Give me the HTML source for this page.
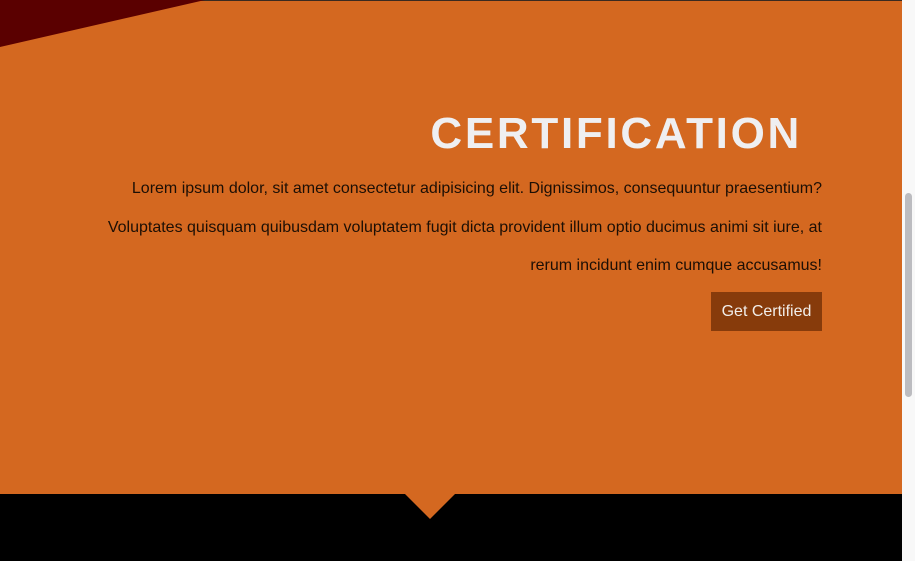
<!DOCTYPE html>
<html><head><style>
html,body{margin:0;padding:0;width:915px;height:561px;overflow:hidden;background:#fff;font-family:"Liberation Sans",Arial,sans-serif}
.sec{position:absolute;left:0;top:0;width:902px;height:494px;background:#d46820;border-top:1px solid #3a2a20;box-sizing:border-box}
.bot{position:absolute;left:0;top:494px;width:902px;height:67px;background:#000}
h1{position:absolute;right:100px;top:108px;margin:0;font-size:44px;font-weight:bold;letter-spacing:2.7px;color:#efeff1;line-height:50px}
.p{position:absolute;right:80px;top:169px;width:800px;text-align:right;font-size:16px;line-height:38.5px;color:#1c0f05;white-space:nowrap}
.btn{position:absolute;left:711px;top:291px;width:111px;height:39px;background:#873b0b;color:#f2eeea;font-size:16px;line-height:39px;text-align:center}
.sb{position:absolute;left:902px;top:0;width:13px;height:561px;background:#f8f8f8}
.th{position:absolute;left:905px;top:193px;width:7px;height:204px;background:#bcbcc0;border-radius:4px}
</style></head><body>
<div class="sec">
<svg width="902" height="494" style="position:absolute;left:0;top:-1px"><polygon points="0,0 205,0 0,47" fill="#5a0000"/></svg>
<h1>CERTIFICATION</h1>
<div class="p">Lorem ipsum dolor, sit amet consectetur adipisicing elit. Dignissimos, consequuntur praesentium?<br>Voluptates quisquam quibusdam voluptatem fugit dicta provident illum optio ducimus animi sit iure, at<br>rerum incidunt enim cumque accusamus!</div>
<div class="btn">Get Certified</div>
</div>
<div class="bot"></div>
<svg width="60" height="30" style="position:absolute;left:400px;top:494px"><polygon points="5,0 55,0 30,25" fill="#d46820"/></svg>
<div class="sb"></div><div class="th"></div>
</body></html>
